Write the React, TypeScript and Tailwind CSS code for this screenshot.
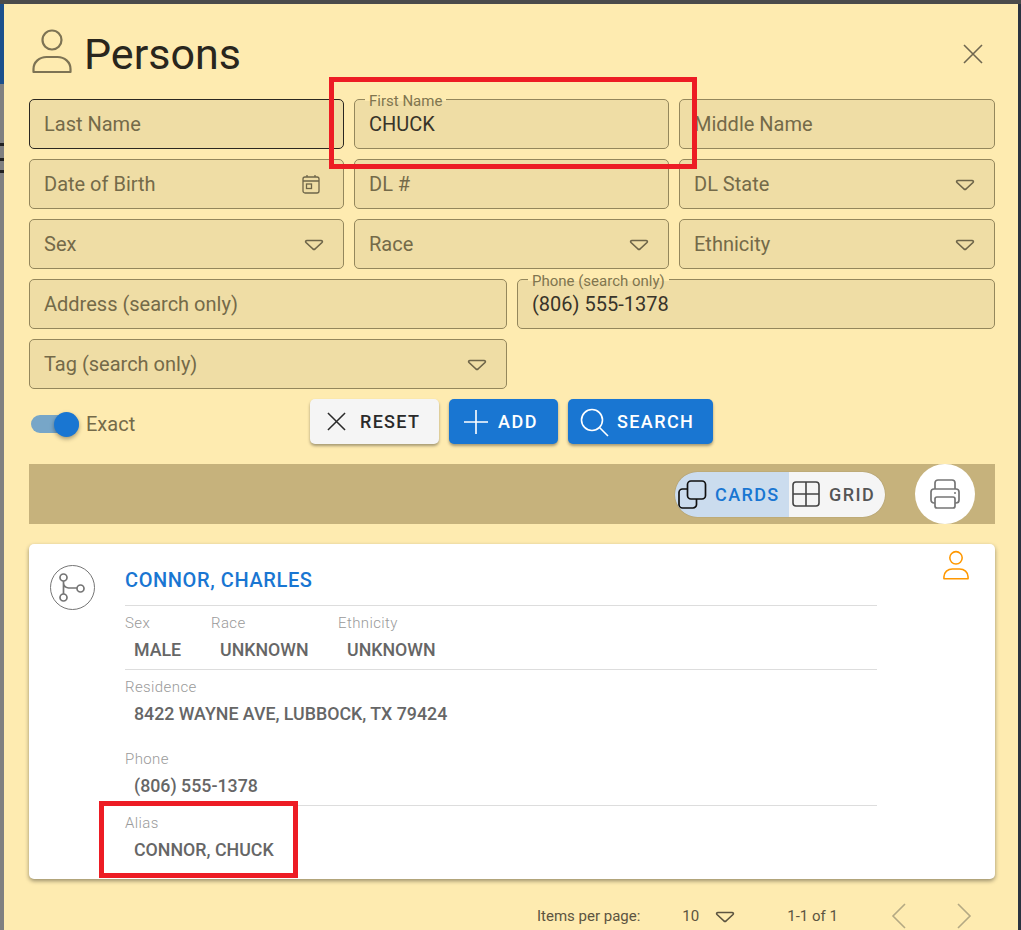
import React from 'react';

const font = { fontFamily: 'Roboto, "Liberation Sans", sans-serif' };

function Caret() {
  return (
    <svg width="20" height="12" viewBox="0 0 20 12" fill="none" stroke="currentColor" strokeWidth="1.700" strokeLinejoin="round" className="mt-[2px]">
      <path d="M3 1.500h14c1.200 0 1.800 1.200 1 2l-7 6.500c-.6.5-1.400.5-2 0L2 3.500c-.8-.8-.2-2 1-2z" />
    </svg>
  );
}

function PersonIcon({ size, className, sw }: { size: number; className?: string; sw: number }) {
  return (
    <svg width={size} height={size} viewBox="0 0 40 46" fill="none" stroke="currentColor" strokeWidth={sw} className={className}>
      <circle cx="20" cy="12" r="9.5" />
      <path d="M1.5 44v-3c0-7 6-12 13-12h11c7 0 13 5 13 12v3z" strokeLinejoin="round" />
    </svg>
  );
}

function CloseIcon({ size, sw }: { size: number; sw: number }) {
  return (
    <svg width={size} height={size} viewBox="0 0 20 20" stroke="currentColor" strokeWidth={sw} fill="none">
      <path d="M1 1l18 18M19 1L1 19" />
    </svg>
  );
}

function Field({
  label,
  value,
  span,
  focused,
  right,
}: {
  label: string;
  value?: string;
  span: string;
  focused?: boolean;
  right?: React.ReactNode;
}) {
  return (
    <div
      className={`relative h-[50px] rounded-[5px] border bg-[#efdda5] pl-[14px] pr-[19px] flex items-center justify-between ${span} ${
        focused ? 'border-[#2b2720]' : 'border-[#94875c]'
      }`}
    >
      {value ? (
        <>
          <span className="absolute left-[10px] top-[-6px] px-[4px] text-[15px] leading-[14px] text-[#80754f] bg-[linear-gradient(#feebb0_50%,#efdda5_50%)]">
            {label}
          </span>
          <span className="text-[20px] text-[#38342a]">{value}</span>
        </>
      ) : (
        <span className="text-[20px] text-[#746a49]">{label}</span>
      )}
      {right && <span className="text-[#6e6549] flex items-center">{right}</span>}
    </div>
  );
}

function Info({ label, value, className }: { label: string; value: string; className?: string }) {
  return (
    <div className={className}>
      <div className="text-[15px] leading-[16px] tracking-[0.4px] font-light text-[#9a9a9a]">{label}</div>
      <div className="mt-[8px] pl-[9px] text-[17.800px] leading-[22px] font-medium text-[#666666]">{value}</div>
    </div>
  );
}

export default function App() {
  return (
    <div style={font} className="relative w-[1021px] h-[930px] overflow-hidden bg-[#808080]">
      {/* what is left of the page behind the dialog */}
      <div className="absolute inset-x-0 top-0 h-[4px] bg-[#4b4b4b]" />
      <div className="absolute left-0 top-[4px] h-[80px] w-[4px] bg-[#1c4f8c]" />
      <div className="absolute left-0 top-[143px] h-[3px] w-[4px] bg-[#222222]" />
      <div className="absolute left-0 top-[158px] h-[3px] w-[4px] bg-[#222222]" />
      <div className="absolute left-0 top-[170px] h-[3px] w-[4px] bg-[#222222]" />
      <div className="absolute right-0 top-[4px] bottom-0 w-[3px] bg-[#2a3340]" />

      <div className="relative ml-[4px] mr-[3px] mt-[4px] h-[926px] bg-[#feebb0] pl-[25px] pr-[23px]">
        {/* Header */}
        <div className="flex items-center justify-between h-[95px] pt-[4px]">
          <div className="flex items-center">
            <PersonIcon size={46} sw={2.2} className="-mt-[5px] text-[#7d7354]" />
            <h1 className="ml-[9px] text-[43px] leading-[48px] text-[#29261d]">Persons</h1>
          </div>
          <span className="mr-[12px] text-[#6f6750]">
            <CloseIcon size={20} sw={1.6} />
          </span>
        </div>

        {/* Search form */}
        <div className="grid grid-cols-[152px_153px_153px_152px_153px_153px] gap-[10px]">
          <Field span="col-span-2" label="Last Name" focused />
          <Field span="col-span-2" label="First Name" value="CHUCK" />
          <Field span="col-span-2" label="Middle Name" />
          <Field
            span="col-span-2"
            label="Date of Birth"
            right={
              <svg width="18" height="20" viewBox="0 0 18 20" fill="none" stroke="currentColor" strokeWidth="1.3" className="mr-[4px]">
                <rect x="1" y="3" width="16" height="16" rx="2" />
                <path d="M1 7h16M5 1v2M13 1v2" />
                <rect x="4.5" y="10" width="5" height="4.5" />
              </svg>
            }
          />
          <Field span="col-span-2" label="DL #" />
          <Field span="col-span-2" label="DL State" right={<Caret />} />
          <Field span="col-span-2" label="Sex" right={<Caret />} />
          <Field span="col-span-2" label="Race" right={<Caret />} />
          <Field span="col-span-2" label="Ethnicity" right={<Caret />} />
          <Field span="col-span-3" label="Address (search only)" />
          <Field span="col-span-3" label="Phone (search only)" value="(806) 555-1378" />
          <Field span="col-span-3" label="Tag (search only)" right={<Caret />} />
        </div>

        {/* Actions */}
        <div className="relative flex h-[45px] mt-[10px] items-start">
          <div className="flex items-center h-[50px] w-[281px]">
            <div className="relative ml-[2px] h-[18px] w-[48px] rounded-full bg-[#77a6c8]">
              <div className="absolute right-0 top-[-3px] h-[25px] w-[25px] rounded-full bg-[#1976d2] shadow-[0_2px_4px_rgba(0,0,0,0.35)]" />
            </div>
            <span className="ml-[7px] text-[20px] text-[#746a49]">Exact</span>
          </div>
          <button className="flex items-center h-[45px] w-[129px] rounded-[5px] bg-[#f5f5f5] pl-[17px] text-[#2a2a2a] shadow-[0_2px_3px_rgba(0,0,0,0.35)]">
            <CloseIcon size={19} sw={1.6} />
            <span className="ml-[14px] text-[18px] font-medium tracking-[1.300px]">RESET</span>
          </button>
          <button className="ml-[10px] flex items-center h-[45px] w-[109px] rounded-[5px] bg-[#1976d2] pl-[15px] text-white shadow-[0_2px_3px_rgba(0,0,0,0.35)]">
            <svg width="24" height="24" viewBox="0 0 24 24" stroke="currentColor" strokeWidth="1.6">
              <path d="M12 0v24M0 12h24" />
            </svg>
            <span className="ml-[10px] text-[18px] font-medium tracking-[1.5px]">ADD</span>
          </button>
          <button className="ml-[10px] flex items-center h-[45px] w-[145px] rounded-[5px] bg-[#1976d2] pl-[11px] text-white shadow-[0_2px_3px_rgba(0,0,0,0.35)]">
            <svg width="30" height="30" viewBox="0 0 30 30" fill="none" stroke="currentColor" strokeWidth="1.6">
              <circle cx="13" cy="13" r="10.5" />
              <path d="M20.5 20.5L29 29" />
            </svg>
            <span className="ml-[8px] text-[18px] font-medium tracking-[1.400px]">SEARCH</span>
          </button>
        </div>

        {/* Toolbar */}
        <div className="mt-[20px] flex h-[60px] items-center justify-end bg-[#c6b27c] pr-[20px]">
          <div className="flex h-[45px] w-[210px] overflow-hidden rounded-full shadow-[0_0_1px_rgba(0,0,0,0.4)]">
            <div className="flex w-[114px] items-center bg-[#cbdcee] pl-[3px] text-[#1976d2]">
              <svg width="29" height="29" viewBox="0 0 29 29" fill="none" stroke="#111111" strokeWidth="1.7" className="shrink-0">
                <rect x="9.500" y="1" width="18" height="18" rx="3.500" />
                <path d="M9.500 9H4.500A3.500 3.500 0 0 0 1 12.500V24.500A3.500 3.500 0 0 0 4.500 28H15A3.500 3.500 0 0 0 18.500 24.500V19" />
              </svg>
              <span className="ml-[8px] text-[18px] font-medium tracking-[1.400px]">CARDS</span>
            </div>
            <div className="flex flex-1 items-center bg-[#f5f5f5] pl-[3px] text-[#555555]">
              <svg width="28" height="26" viewBox="0 0 28 26" fill="none" stroke="#444444" strokeWidth="1.6" className="shrink-0">
                <rect x="1" y="1" width="26" height="24" rx="3" />
                <path d="M14 1v24M1 13h26" />
              </svg>
              <span className="ml-[9px] text-[18px] font-medium tracking-[1.400px]">GRID</span>
            </div>
          </div>
          <div className="ml-[30px] flex h-[60px] w-[60px] items-center justify-center rounded-full bg-white text-[#757575]">
            <svg width="30" height="30" viewBox="0 0 30 30" fill="none" stroke="currentColor" strokeWidth="1.7">
              <path d="M5 10V4a3 3 0 0 1 3-3h14a3 3 0 0 1 3 3v6" />
              <path d="M5 24H4a3 3 0 0 1-3-3v-8a3 3 0 0 1 3-3h22a3 3 0 0 1 3 3v8a3 3 0 0 1-3 3h-1" />
              <rect x="5" y="18" width="20" height="11" rx="2" />
              <circle cx="25" cy="14" r="1" fill="currentColor" stroke="none" />
            </svg>
          </div>
        </div>

        {/* Result card */}
        <div className="relative mt-[20px] flex h-[335px] rounded-[5px] bg-white shadow-[0_2px_4px_rgba(0,0,0,0.4)]">
          <div className="w-[96px] pl-[21px] pt-[21px] shrink-0">
            <svg width="45" height="45" viewBox="0 0 45 45" fill="none" stroke="#757575">
              <circle cx="22.5" cy="22.500" r="22" strokeWidth="1" />
              <g strokeWidth="1.700">
                <circle cx="13.500" cy="12.500" r="3.500" />
                <circle cx="13.500" cy="32.500" r="3.500" />
                <circle cx="30.500" cy="23.500" r="3.500" />
                <path d="M13.500 16v13M13.500 18c0 3 2 4.500 5 5h8.500" />
              </g>
            </svg>
          </div>
          <div className="w-[752px]">
            <div className="h-[62px] border-b border-[#dddddd] pt-[23px] text-[20px] leading-[26px] font-medium tracking-[0.6px] text-[#1976d2]">
              CONNOR, CHARLES
            </div>
            <div className="flex h-[64px] border-b border-[#dddddd] pt-[9px]">
              <Info label="Sex" value="MALE" className="w-[86px]" />
              <Info label="Race" value="UNKNOWN" className="w-[127px]" />
              <Info label="Ethnicity" value="UNKNOWN" />
            </div>
            <Info label="Residence" value="8422 WAYNE AVE, LUBBOCK, TX 79424" className="pt-[9px] h-[72px]" />
            <Info label="Phone" value="(806) 555-1378" className="pt-[9px] h-[64px] border-b border-[#dddddd]" />
            <Info label="Alias" value="CONNOR, CHUCK" className="pt-[9px]" />
          </div>
          <PersonIcon size={30} sw={2.4} className="absolute right-[24px] top-[6px] text-[#ff9800]" />
        </div>

        {/* Paginator */}
        <div className="mt-[23px] flex h-[28px] items-center text-[15px] text-[#5c5440]">
          <span className="ml-[508px]">Items per page:</span>
          <span className="ml-[42px]">10</span>
          <span className="ml-[16px]">
            <Caret />
          </span>
          <span className="ml-[52px]">1-1 of 1</span>
          <svg width="16" height="26" viewBox="0 0 16 26" fill="none" stroke="#b4a983" strokeWidth="1.600" className="ml-[53px]">
            <path d="M14 1L2 13l12 12" />
          </svg>
          <svg width="16" height="26" viewBox="0 0 16 26" fill="none" stroke="#b4a983" strokeWidth="1.600" className="ml-[49px]">
            <path d="M2 1l12 12L2 25" />
          </svg>
        </div>
      </div>

      {/* Red annotation boxes */}
      <div className="absolute left-[329px] top-[77px] h-[92px] w-[368px] border-[5px] border-[#ed1c24]" />
      <div className="absolute left-[99px] top-[801px] h-[77px] w-[199px] border-[5px] border-[#ed1c24]" />
    </div>
  );
}
